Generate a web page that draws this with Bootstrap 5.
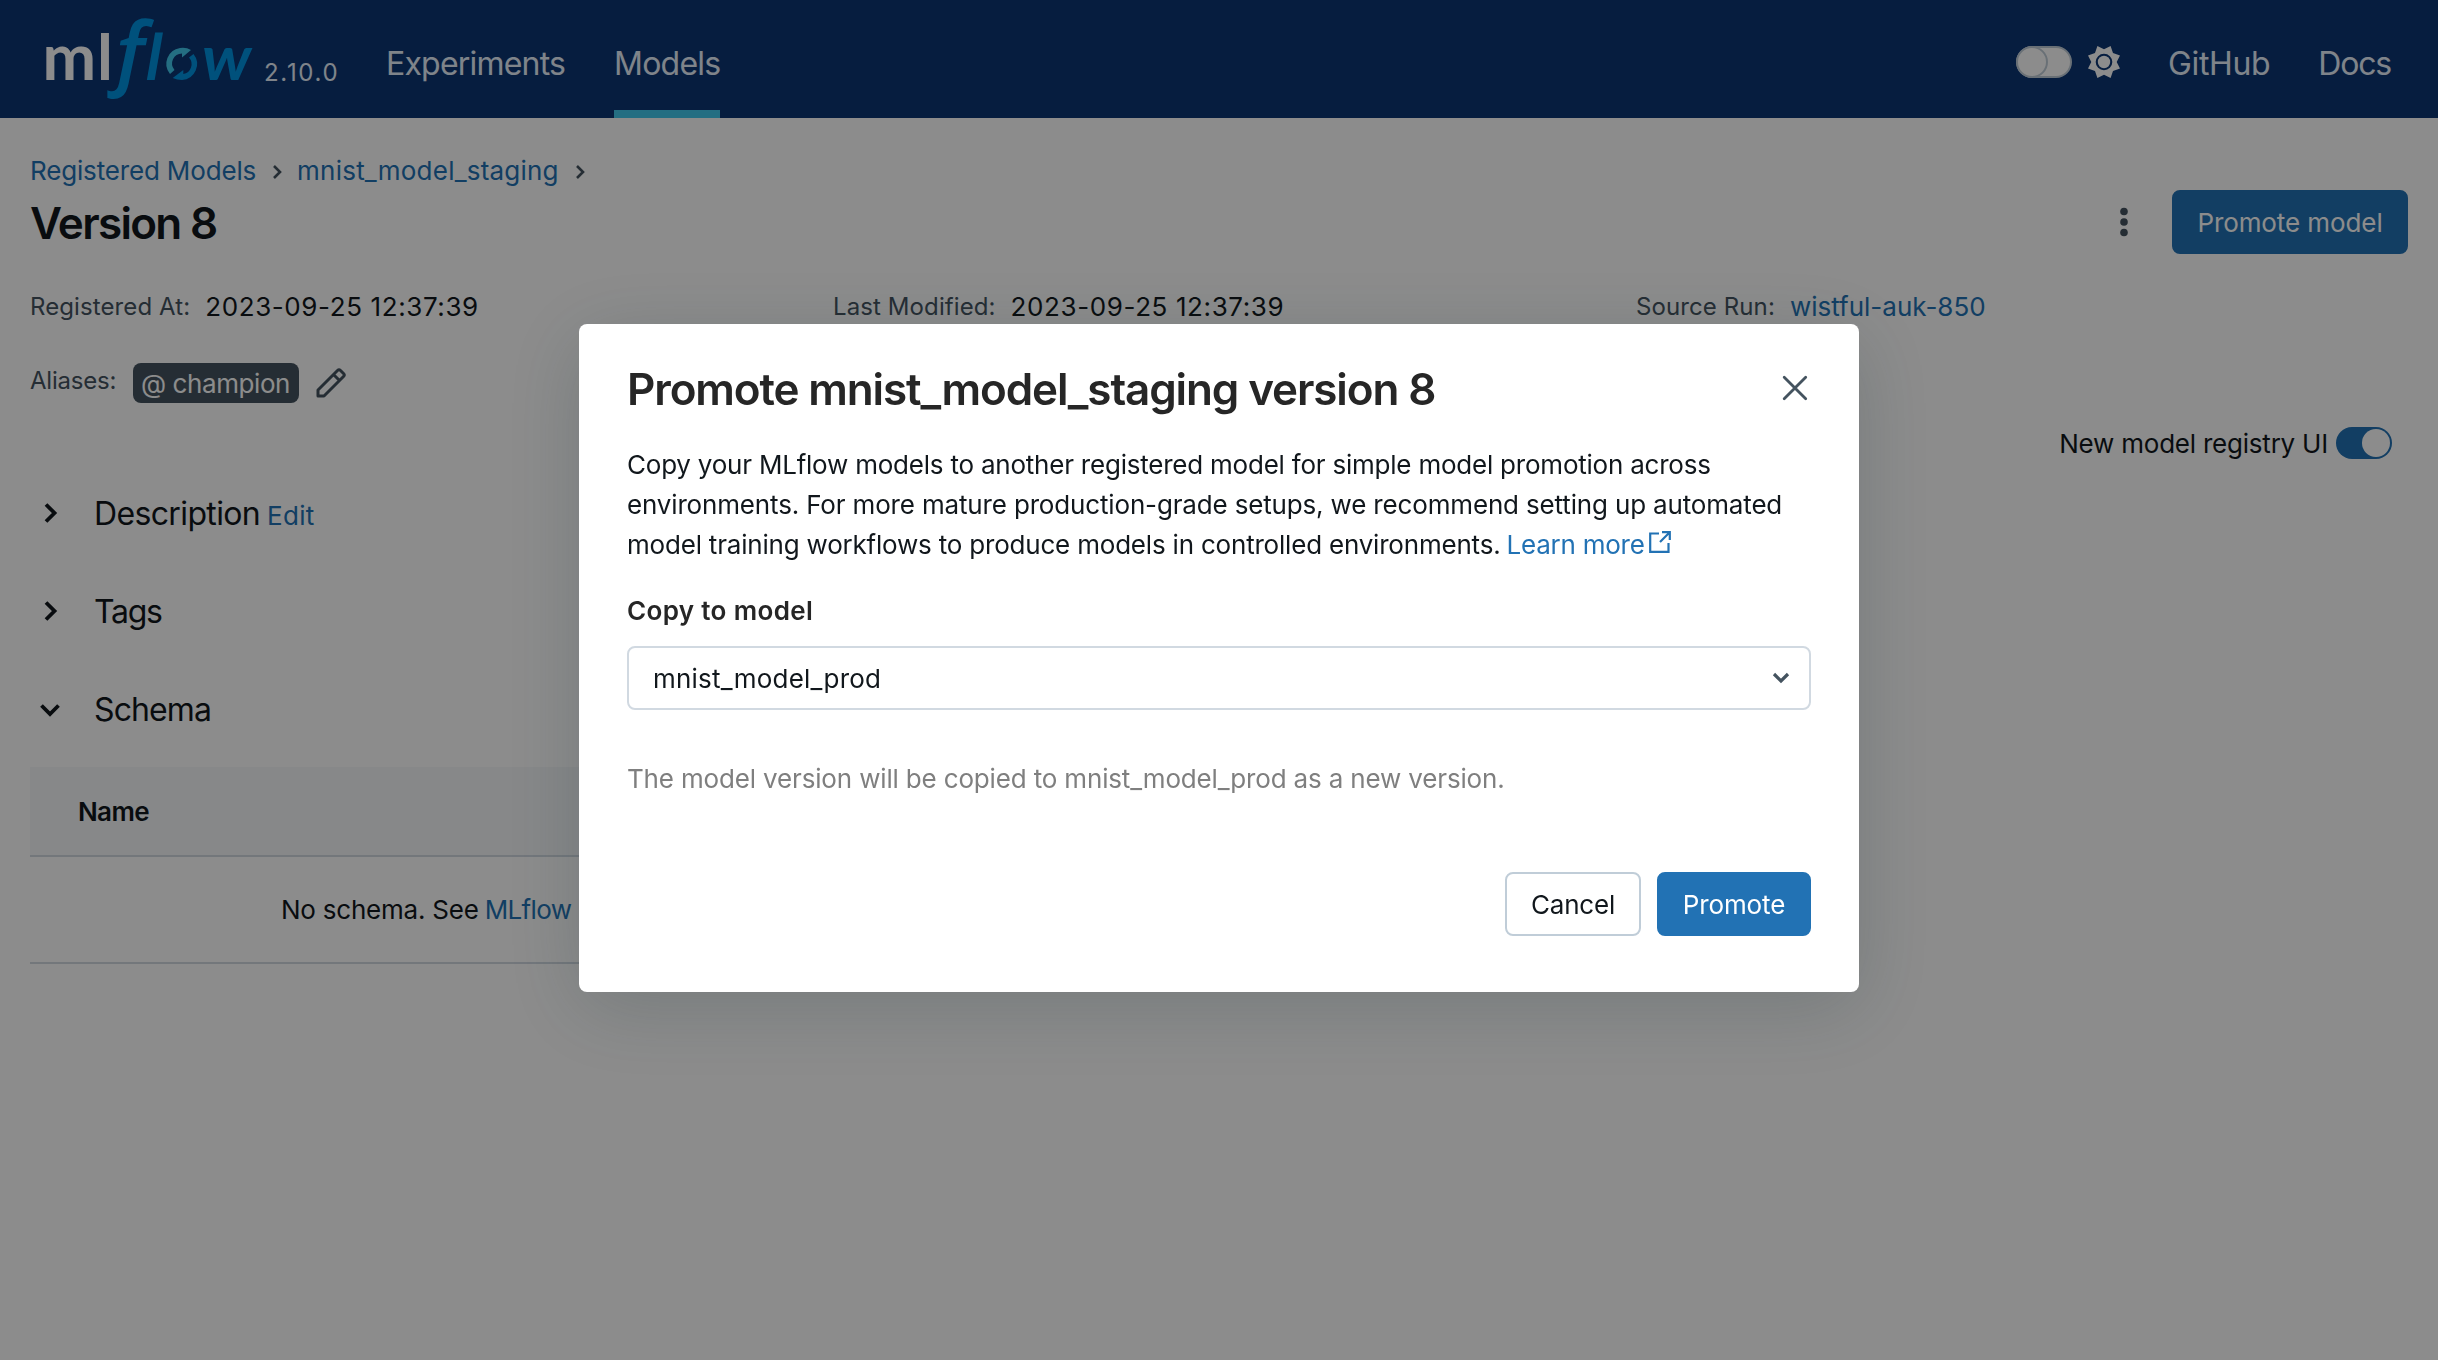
<!DOCTYPE html>
<html lang="en">
<head>
<meta charset="utf-8">
<meta name="viewport" content="width=device-width, initial-scale=1">
<title>MLflow</title>
<link href="https://cdn.jsdelivr.net/npm/bootstrap@5.3.0/dist/css/bootstrap.min.css" rel="stylesheet">
<style>
body{font-family:Inter,"Noto Sans",sans-serif;font-size:26px;line-height:40px;color:#11171c;background:#fff;height:100vh;overflow:hidden}
a{color:#2272b4;text-decoration:none}
svg{display:block;flex:none}
.topbar{height:118px;background:#0b3574;padding:0 47px 0 0}
.topbar .nav{gap:48px}
.topbar .nav.main-nav{gap:49px}
.topbar .nav-link{height:118px;padding:9px 0 0;font-size:32px;color:#e7f1fb;display:flex;align-items:center;position:relative}
.topbar .nav-link.active::after{content:"";position:absolute;left:0;right:0;bottom:0;height:8px;background:#43c9ed}
.brand-logo{overflow:visible}
.ver{font-size:24px;color:#e7f1fb;padding-top:28px;margin-left:10px;width:122px;letter-spacing:1.7px}
.theme-switch{margin-top:6px}
.sun{margin:6px 47px 0 15px}
.page{padding:32px 30px 0}
.crumbs{height:40px}
.crumbs svg{margin:3px 15px 0 16px}
.crumbs a,.title-row h1,.sect>span,.schema .hd span,.pick>span,.regui>span{padding-top:2px}
.title-row{height:64px}
.title-row h1,.promo h2{font-size:44px;font-weight:600;line-height:60px;margin:0}
.kebab{margin-right:44px}
.btn{height:64px;border-radius:8px;border-width:2px;font-size:26px;line-height:1;padding:2px 0 0;white-space:nowrap}
.btn-primary{--bs-btn-bg:#2272b4;--bs-btn-border-color:#2272b4}
.btn-plain{border-color:#c0cdd8;color:#11171c;background:#fff}
.w-model{width:236px}.w-cancel{width:136px}.w-promote{width:154px}
.lbl{font-size:24px;color:#44535f}
.meta{height:40px;margin-top:32px;padding-top:1px}
.meta>div{width:803px;flex:none}
.meta .lbl{margin-right:15px;letter-spacing:.1px}
.meta .val{letter-spacing:.6px}
.meta a.val{letter-spacing:0}
.aliases{height:40px;margin-top:37px}
.aliases .lbl{padding-bottom:4px;width:103px;letter-spacing:-.2px}
.aliases svg{margin-left:17px}
.alias{background:#44535f;color:#fff;border-radius:8px;height:40px;padding:1px 0 0 8px;line-height:40px;width:166px;white-space:nowrap;letter-spacing:-.42px}
.regui{height:32px;margin-top:24px;padding-right:16px}
.regui svg{margin-left:8px}
.sections{padding-top:5px}
.sect{height:98px;font-size:32px}
.sect svg{margin:0 30px 0 6px}
.sect a{font-size:26px;padding-top:6px;margin-left:7px;letter-spacing:.3px}
.schema{margin-top:9px;width:1400px}
.schema .hd{background:#f6f8fa;height:90px;border-bottom:2px solid #d1d9e1;padding:0 48px;font-weight:600}
.schema .bd{height:107px;border-bottom:2px solid #d1d9e1;padding-left:251px}
.schema .bd a{margin-left:6px}
.tr-17{letter-spacing:-1.68px}.tr-13{letter-spacing:-1.3px}.tr-12{letter-spacing:-1.18px}.tr-11{letter-spacing:-1.12px}
.tr-9{letter-spacing:-.88px}.tr-8{letter-spacing:-.8px}.tr-6{letter-spacing:-.64px}
.tr-35{letter-spacing:-.36px}.tr-25{letter-spacing:-.25px}.tr-22{letter-spacing:-.22px}.tr-2{letter-spacing:-.2px}.tr-15{letter-spacing:-.16px}
.tr-1{letter-spacing:-.09px}.tr2{letter-spacing:.22px}.tr35{letter-spacing:.35px}
.modal-backdrop.dim{--bs-backdrop-opacity:.45}
.modal-dialog.promo{width:1280px;max-width:none;margin:324px 0 0 579px}
.promo .modal-content{border:0;border-radius:8px;height:668px;padding:0 48px;box-shadow:0 16px 80px rgba(27,49,57,.2);color:#11171c}
.promo .hdr{height:120px;padding-top:10px;color:#262626}
.promo .hdr svg{margin:0 3px 2px 0}
.promo .copylbl{margin-top:26px;font-weight:600;color:#262626}
.promo .pick{height:64px;margin-top:15px;border:2px solid #d1d9e1;border-radius:8px;padding:0 19px 0 24px}
.promo .hint{margin-top:49px;color:#7f7f7f}
.promo .acts{margin-top:73px;gap:16px}
.promo p{padding-top:1px}
.promo p a{margin-left:-1px}
.promo p svg{display:inline-block;vertical-align:1px;margin-left:4px}
.ln{white-space:nowrap;display:block}
</style>
</head>
<body>
<header class="topbar d-flex align-items-center">
  <svg class="brand-logo" width="254" height="118" viewBox="0 0 254 118" role="img" aria-label="mlflow">
    <text x="42.500" y="80" font-family="Lato" font-weight="700" font-size="64" fill="#fff" letter-spacing="1">ml</text>
    <g fill="#0194e2" font-style="italic">
      <text x="108" y="78.500" font-family="Open Sans" font-weight="600" font-size="83">ƒ</text>
      <text transform="translate(145.500 80) skewX(-3)" font-family="Lato" font-weight="700" font-size="64">l</text>
      <text transform="translate(202 80) scale(1.080 1)" font-family="Lato" font-weight="700" font-size="62">w</text>
    </g>
    <path fill="#43c9ed" d="M170 74A16 16 0 0 1 180 48Q186 47 191 50L182 57.500V53.500A10 10 0 0 0 174.500 70Z"/>
    <path fill="#0194e2" d="M193.500 54A16 16 0 0 1 182 80Q177 80 172.700 78L183.300 70V74A10 10 0 0 0 189 57.500Z"/>
  </svg>
  <span class="ver">2.10.0</span>
  <nav class="nav main-nav flex-nowrap">
    <a class="nav-link tr-8" href="#">Experiments</a>
    <a class="nav-link active tr-8" href="#">Models</a>
  </nav>
  <div class="d-flex align-items-center ms-auto">
    <svg class="theme-switch" width="56" height="32" viewBox="0 0 56 32"><rect x="1" y="1" width="54" height="30" rx="15" fill="#fff" stroke="#c0cdd8" stroke-width="2"/><circle cx="16" cy="16" r="15" fill="#fff" stroke="#c0cdd8" stroke-width="2"/></svg>
    <svg class="sun" width="34" height="34" viewBox="-17 -17 34 34" fill="#fff"><path fill-rule="evenodd" d="M-6.600-16L0-12.700 6.600-16 9-9 16-6.600 12.700 0 16 6.600 9 9 6.600 16 0 12.700-6.600 16-9 9-16 6.600-12.700 0-16-6.600-9-9ZM0-8.300A8.300 8.300 0 1 0 0 8.300 8.300 8.300 0 1 0 0-8.300Z"/><circle r="6.200"/></svg>
    <nav class="nav flex-nowrap">
      <a class="nav-link tr-35" href="#">GitHub</a>
      <a class="nav-link tr-12" href="#">Docs</a>
    </nav>
  </div>
</header>

<main class="page">
  <div class="crumbs d-flex align-items-center">
    <a class="tr-15" href="#">Registered Models</a>
    <svg width="10" height="16" viewBox="0 0 10 16" fill="none" stroke="#44535f" stroke-width="2.600"><path d="M2 2l6 6-6 6"/></svg>
    <a class="tr2" href="#">mnist_model_staging</a>
    <svg width="10" height="16" viewBox="0 0 10 16" fill="none" stroke="#44535f" stroke-width="2.600"><path d="M2 2l6 6-6 6"/></svg>
  </div>
  <div class="title-row d-flex align-items-center">
    <h1 class="tr-17">Version 8</h1>
    <svg class="kebab ms-auto" width="8" height="30" viewBox="0 0 8 30" fill="#44535f"><circle cx="4" cy="4.500" r="3.800"/><circle cx="4" cy="15" r="3.800"/><circle cx="4" cy="25.500" r="3.800"/></svg>
    <button class="btn btn-primary w-model tr-1">Promote model</button>
  </div>
  <div class="meta d-flex">
    <div class="d-flex"><span class="lbl">Registered At:</span><span class="val">2023-09-25 12:37:39</span></div>
    <div class="d-flex"><span class="lbl">Last Modified:</span><span class="val">2023-09-25 12:37:39</span></div>
    <div class="d-flex"><span class="lbl">Source Run:</span><a class="val" href="#">wistful-auk-850</a></div>
  </div>
  <div class="aliases d-flex align-items-center">
    <span class="lbl">Aliases:</span>
    <span class="alias">@ champion</span>
    <svg width="30" height="30" viewBox="0 0 30 30" fill="none" stroke="#44535f" stroke-width="3" stroke-linejoin="round"><path d="M2 28V22L21.500 2.500Q23 1 24.500 2.500L27.500 5.500Q29 7 27.500 8.500L8 28ZM17.500 6.500L23.500 12.500"/></svg>
  </div>
  <div class="regui d-flex align-items-center justify-content-end">
    <span class="tr-22">New model registry UI</span>
    <svg width="56" height="32" viewBox="0 0 56 32"><rect width="56" height="32" rx="16" fill="#2272b4"/><circle cx="40" cy="16" r="14" fill="#fff"/></svg>
  </div>
  <div class="sections">
    <section class="sect d-flex align-items-center"><svg width="28" height="28" viewBox="0 0 28 28" fill="none" stroke="#11171c" stroke-width="3.800"><path d="M10 5.500l8.500 8.500-8.500 8.500"/></svg><span class="tr-6">Description</span><a href="#">Edit</a></section>
    <section class="sect d-flex align-items-center"><svg width="28" height="28" viewBox="0 0 28 28" fill="none" stroke="#11171c" stroke-width="3.800"><path d="M10 5.500l8.500 8.500-8.500 8.500"/></svg><span class="tr-13">Tags</span></section>
    <section class="sect d-flex align-items-center"><svg width="28" height="28" viewBox="0 0 28 28" fill="none" stroke="#11171c" stroke-width="3.800"><path d="M5.500 10.500l8.500 8.500 8.500-8.500"/></svg><span class="tr-9">Schema</span></section>
  </div>
  <div class="schema">
    <div class="hd d-flex align-items-center"><span class="tr-6">Name</span></div>
    <div class="bd d-flex align-items-center"><span class="tr-22">No schema. See</span><a class="tr-6" href="#">MLflow</a></div>
  </div>
</main>

<div class="modal-backdrop dim show"></div>
<div class="modal show d-block" tabindex="-1" role="dialog">
  <div class="modal-dialog promo">
    <div class="modal-content">
      <div class="hdr d-flex align-items-center justify-content-between">
        <h2 class="tr-11">Promote mnist_model_staging version 8</h2>
        <svg width="26" height="26" viewBox="0 0 26 26" fill="none" stroke="#44535f" stroke-width="2.800" stroke-linecap="round"><path d="M2.200 2.200l21.500 21.500M23.700 2.200l-21.500 21.500"/></svg>
      </div>
      <p class="m-0">
        <span class="ln tr-22">Copy your MLflow models to another registered model for simple model promotion across</span>
        <span class="ln tr-15">environments. For more mature production-grade setups, we recommend setting up automated</span>
        <span class="ln tr-2">model training workflows to produce models in controlled environments. <a class="tr-25" href="#">Learn more<svg width="22" height="22" viewBox="0 0 22 22" fill="none" stroke="#2272b4" stroke-width="2.200"><path d="M10 2.500H1.200V20.800H19.500V12M13 1.200H20.800V9M20.500 1.500L11 11"/></svg></a></span>
      </p>
      <div class="copylbl tr35">Copy to model</div>
      <div class="pick d-flex align-items-center justify-content-between"><span class="tr2">mnist_model_prod</span><svg width="18" height="12" viewBox="0 0 18 12" fill="none" stroke="#44535f" stroke-width="3.200"><path d="M2 2l7 7 7-7"/></svg></div>
      <div class="hint tr-15">The model version will be copied to mnist_model_prod as a new version.</div>
      <div class="acts d-flex justify-content-end">
        <button class="btn btn-plain w-cancel tr-2">Cancel</button>
        <button class="btn btn-primary w-promote tr-1">Promote</button>
      </div>
    </div>
  </div>
</div>
<script src="https://cdn.jsdelivr.net/npm/bootstrap@5.3.0/dist/js/bootstrap.bundle.min.js"></script>
</body>
</html>
